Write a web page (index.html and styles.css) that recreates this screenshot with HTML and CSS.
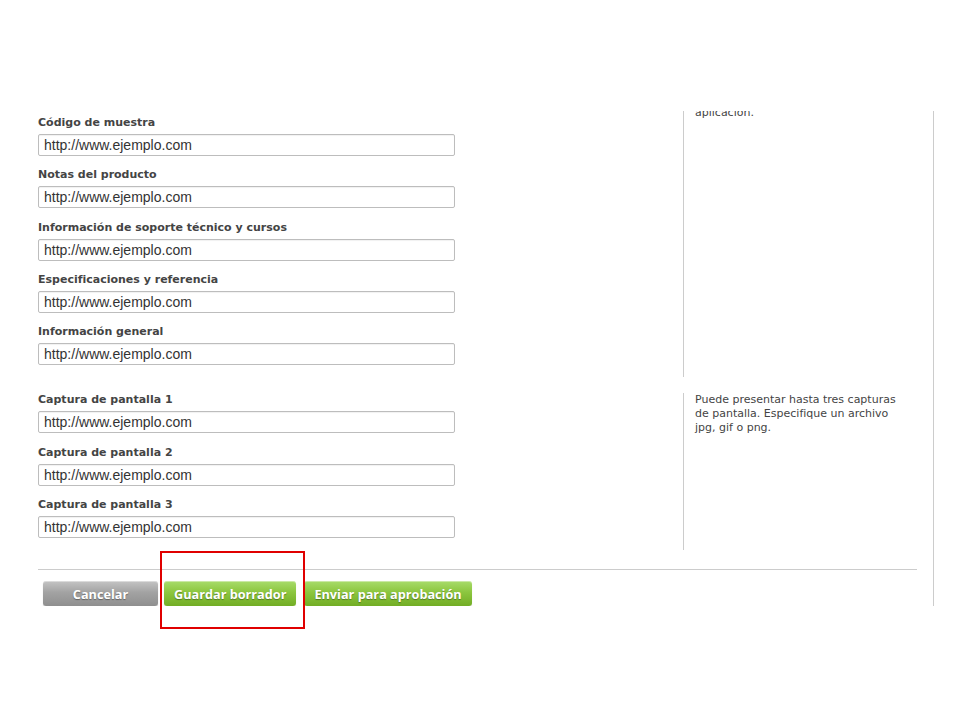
FILE: index.html
```html
<!DOCTYPE html>
<html lang="es">
<head>
    <meta charset="UTF-8">
    <meta name="viewport" content="width=device-width, initial-scale=1.0">
    <title>Recursos de la aplicación</title>
    <link rel="stylesheet" href="styles.css">
</head>
<body>
    <div class="clip">
        <div class="panel">
            <div class="section">
                <div class="fields">
                    <div class="field">
                        <label for="codigo">Código de muestra</label>
                        <input id="codigo" type="text" value="http://www.ejemplo.com">
                    </div>
                    <div class="field">
                        <label for="notas">Notas del producto</label>
                        <input id="notas" type="text" value="http://www.ejemplo.com">
                    </div>
                    <div class="field">
                        <label for="soporte">Información de soporte técnico y cursos</label>
                        <input id="soporte" type="text" value="http://www.ejemplo.com">
                    </div>
                    <div class="field">
                        <label for="specs">Especificaciones y referencia</label>
                        <input id="specs" type="text" value="http://www.ejemplo.com">
                    </div>
                    <div class="field">
                        <label for="general">Información general</label>
                        <input id="general" type="text" value="http://www.ejemplo.com">
                    </div>
                </div>
                <div class="aside">
                    <p class="note note-cut">Especifique las URL de los recursos<br>adicionales disponibles para su<br>aplicación.</p>
                </div>
            </div>

            <div class="section">
                <div class="fields">
                    <div class="field">
                        <label for="cap1">Captura de pantalla 1</label>
                        <input id="cap1" type="text" value="http://www.ejemplo.com">
                    </div>
                    <div class="field">
                        <label for="cap2">Captura de pantalla 2</label>
                        <input id="cap2" type="text" value="http://www.ejemplo.com">
                    </div>
                    <div class="field">
                        <label for="cap3">Captura de pantalla 3</label>
                        <input id="cap3" type="text" value="http://www.ejemplo.com">
                    </div>
                </div>
                <div class="aside">
                    <p class="note">Puede presentar hasta tres capturas de pantalla. Especifique un archivo jpg, gif o png.</p>
                </div>
            </div>

            <hr class="divider">

            <div class="actions">
                <button class="btn btn-gray btn-cancel">Cancelar</button>
                <button class="btn btn-green">Guardar borrador</button>
                <button class="btn btn-green">Enviar para aprobación</button>
            </div>
        </div>
    </div>

    <div class="highlight"></div>
</body>
</html>
```

FILE: styles.css
```css
body {
    margin: 0;
    padding: 0;
    background-color: #fff;
    font-family: "DejaVu Sans", Verdana, sans-serif;
    color: #444;
}
.clip {
    margin-top: 111px;
    overflow: hidden;
}
.panel {
    margin-left: 38px;
    width: 879px;
    padding-right: 16px;
    border-right: 1px solid #ccc;
}
.section {
    display: grid;
    grid-template-columns: 645px 1fr;
    margin-bottom: 16px;
}
.section:first-child .fields {
    padding-top: 5px;
}
.field {
    margin-bottom: 12.3px;
}
.field label {
    display: block;
    font-size: 11px;
    font-weight: bold;
    line-height: 14px;
    color: #444;
    margin-bottom: 4px;
}
.field input {
    display: block;
    box-sizing: border-box;
    width: 417px;
    height: 22px;
    padding: 0 5px;
    border: 1px solid #bdbdbd;
    border-radius: 2px;
    box-shadow: inset 0 1px 1px rgba(0, 0, 0, 0.06);
    font-family: "Liberation Sans", Arial, sans-serif;
    font-size: 14px;
    color: #333;
}
.aside {
    border-left: 1px solid #ccc;
    padding-left: 11px;
    padding-right: 12px;
}
.note {
    margin: 0;
    font-size: 11px;
    line-height: 14px;
    color: #444;
}
.note-cut {
    margin-top: -33px;
}
.divider {
    margin: 19px 0 11px;
    border: 0;
    border-top: 1px solid #ccc;
}
.actions {
    display: flex;
    gap: 6px;
    padding-left: 5px;
}
.btn {
    height: 25px;
    padding: 0 10px;
    border: 0;
    border-radius: 3px;
    font-family: "Open Sans", sans-serif;
    font-size: 12.7px;
    font-weight: bold;
    color: #fff;
    text-shadow: 0 1px 1px rgba(0, 0, 0, 0.35);
    cursor: pointer;
}
.btn-gray {
    background: linear-gradient(#c4c4c4, #a3a3a3 45%, #8f8f8f);
    box-shadow: inset 0 1px 0 rgba(255, 255, 255, 0.4), 0 1px 1px rgba(0, 0, 0, 0.2);
}
.btn-green {
    background: linear-gradient(#a8dc6b, #8cc63f 45%, #72ad25);
    box-shadow: inset 0 1px 0 rgba(255, 255, 255, 0.4), 0 1px 1px rgba(0, 0, 0, 0.15);
}
.btn-cancel {
    width: 115px;
}
.btn-green + .btn-green {
    margin-left: 2px;
}
.highlight {
    position: absolute;
    left: 160px;
    top: 551px;
    width: 141px;
    height: 74px;
    border: 2px solid #e00000;
}
```
